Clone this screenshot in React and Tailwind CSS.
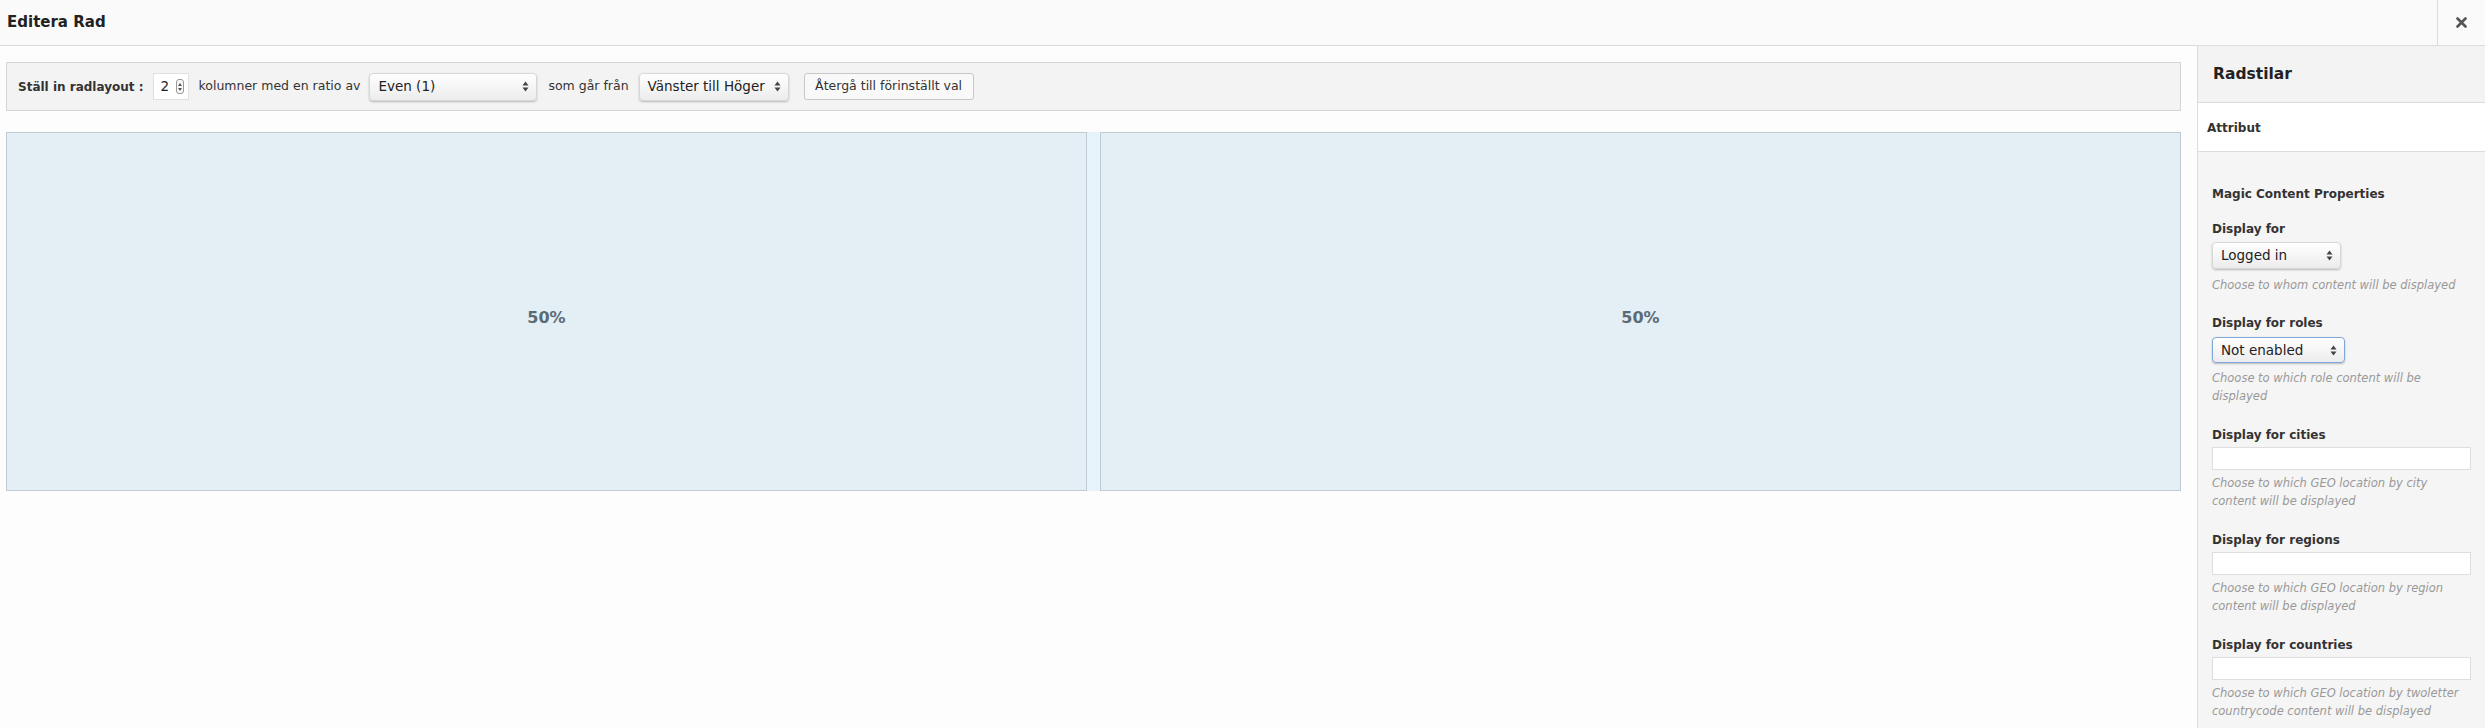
import React from "react";

const Arrows = () => (
  <svg width="7" height="11" viewBox="0 0 7 11" className="shrink-0">
    <path d="M3.5 0.5 L6.5 4.5 L0.5 4.5 Z" fill="#444" />
    <path d="M3.5 10.5 L6.5 6.5 L0.5 6.5 Z" fill="#444" />
  </svg>
);

const FakeSelect = ({ label, className = "", focus = false }) => (
  <div
    className={`flex items-center justify-between rounded-[4px] bg-gradient-to-b from-[#ffffff] to-[#ececec] pl-[8px] pr-[7px] text-[13.5px] text-[#222] shadow-[0_1px_2px_rgba(0,0,0,0.25)] ${
      focus ? "border border-[#7fa7dc] shadow-[0_0_2px_#9bbce8]" : "border border-[#d8d8d8]"
    } ${className}`}
  >
    <span>{label}</span>
    <Arrows />
  </div>
);

const Field = ({ label, children, help, className = "" }) => (
  <div className={className}>
    <div className="text-[12px] font-bold leading-[18px] text-[#333]">{label}</div>
    {children}
    <div className="whitespace-nowrap text-[11.5px] italic leading-[18px] text-[#999]">{help}</div>
  </div>
);

const TextBox = () => (
  <div className="mt-[3px] h-[23px] w-[259px] border border-[#dedede] bg-white" />
);

export default function App() {
  return (
    <div className="flex h-[728px] w-[2485px] flex-col overflow-hidden bg-[#fdfdfd] font-['DejaVu_Sans',sans-serif]">
      <div className="flex h-[46px] shrink-0 items-center border-b border-[#dcdcdc] bg-[#fafafa]">
        <h1 className="flex-1 pl-[7px] text-[15px] font-bold text-[#222]">Editera Rad</h1>
        <div className="flex h-full w-[48px] items-center justify-center border-l border-[#dcdcdc]">
          <svg width="11" height="11" viewBox="0 0 11 11">
            <path d="M1.5 1.5 L9.5 9.5 M9.5 1.5 L1.5 9.5" stroke="#555" strokeWidth="2.6" strokeLinecap="round" />
          </svg>
        </div>
      </div>

      <div className="flex flex-1">
        <div className="w-[2197px] shrink-0 pl-[6px] pr-[16px] pt-[16px]">
          <div className="flex h-[49px] items-center border border-[#d4d4d4] bg-[#f3f3f3] pl-[11px] text-[12.5px] text-[#333]">
            <span className="text-[12px] font-bold">Ställ in radlayout :</span>
            <div className="ml-[10px] flex h-[27px] w-[36px] items-center justify-between border border-[#e0e0e0] bg-white pl-[6px] pr-[4px] text-[13.5px] text-[#222]">
              <span>2</span>
              <div className="flex h-[15px] w-[8px] flex-col items-center justify-center gap-[2px] rounded-[3px] border border-[#999] bg-[#f8f8f8]">
                <svg width="4" height="3" viewBox="0 0 4 3"><path d="M2 0 L4 3 L0 3 Z" fill="#555" /></svg>
                <svg width="4" height="3" viewBox="0 0 4 3"><path d="M2 3 L4 0 L0 0 Z" fill="#555" /></svg>
              </div>
            </div>
            <span className="ml-[9px]">kolumner med en ratio av</span>
            <FakeSelect label="Even (1)" className="ml-[9px] h-[28px] w-[168px]" />
            <span className="ml-[11px]">som går från</span>
            <FakeSelect label="Vänster till Höger" className="ml-[10px] h-[28px] w-[150px]" />
            <button className="ml-[15px] h-[27px] w-[170px] rounded-[3px] border border-[#c8c8c8] bg-[#f9f9f9] text-[12.5px] text-[#333]">
              Återgå till förinställt val
            </button>
          </div>

          <div className="mt-[21px] flex h-[359px] gap-[13px] bg-[#e6f3fa]">
            <div className="flex flex-1 items-center justify-center border border-[#bfccd4] bg-[#e3eef5] pt-[13px] text-[16px] font-bold text-[#5b6b76]">
              50%
            </div>
            <div className="flex flex-1 items-center justify-center border border-[#bfccd4] bg-[#e3eef5] pt-[13px] text-[16px] font-bold text-[#5b6b76]">
              50%
            </div>
          </div>
        </div>

        <div className="flex-1 border-l border-[#dcdcdc] bg-[#f5f5f5]">
          <div className="flex h-[57px] items-center border-b border-[#dcdcdc] bg-[#f3f3f3] pl-[15px] pt-[2px] text-[15.5px] font-bold text-[#222]">
            Radstilar
          </div>
          <div className="flex h-[49px] items-center border-b border-[#dcdcdc] bg-white pl-[9px] pt-[2px] text-[12px] font-bold text-[#333]">
            Attribut
          </div>
          <div className="pl-[14px] pt-[33px]">
            <div className="text-[12px] font-bold leading-[18px] text-[#333]">Magic Content Properties</div>
            <Field
              className="mt-[17px]"
              label="Display for"
              help={<div className="mt-[7px]">Choose to whom content will be displayed</div>}
            >
              <FakeSelect label="Logged in" className="mt-[4px] h-[27px] w-[129px]" />
            </Field>
            <Field
              className="mt-[20px]"
              label="Display for roles"
              help={<div className="mt-[6px]">Choose to which role content will be<br />displayed</div>}
            >
              <FakeSelect label="Not enabled" focus className="mt-[5px] h-[26px] w-[133px]" />
            </Field>
            <Field
              className="mt-[21px]"
              label="Display for cities"
              help={<div className="mt-[4px]">Choose to which GEO location by city<br />content will be displayed</div>}
            >
              <TextBox />
            </Field>
            <Field
              className="mt-[21px]"
              label="Display for regions"
              help={<div className="mt-[4px]">Choose to which GEO location by region<br />content will be displayed</div>}
            >
              <TextBox />
            </Field>
            <Field
              className="mt-[21px]"
              label="Display for countries"
              help={<div className="mt-[4px]">Choose to which GEO location by twoletter<br />countrycode content will be displayed</div>}
            >
              <TextBox />
            </Field>
          </div>
        </div>
      </div>
    </div>
  );
}
